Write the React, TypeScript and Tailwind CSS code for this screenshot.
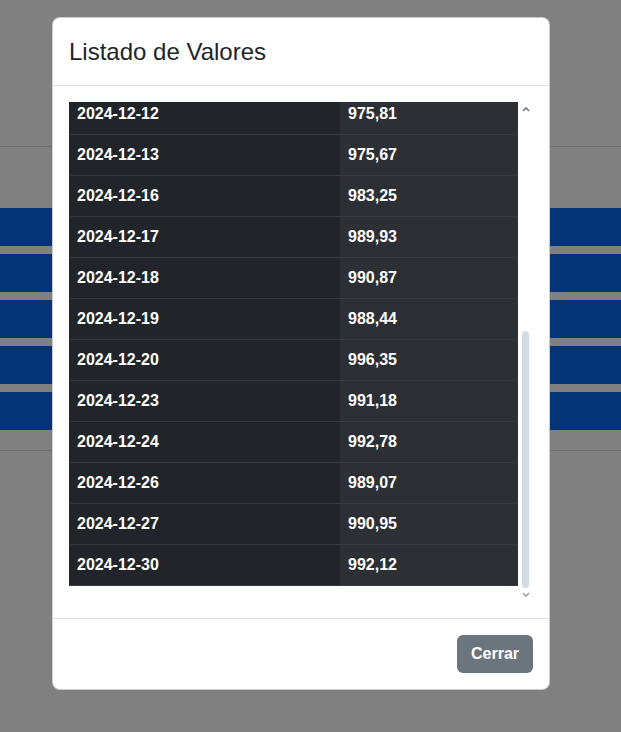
const valores = [
  ["2024-12-12", "975,81"],
  ["2024-12-13", "975,67"],
  ["2024-12-16", "983,25"],
  ["2024-12-17", "989,93"],
  ["2024-12-18", "990,87"],
  ["2024-12-19", "988,44"],
  ["2024-12-20", "996,35"],
  ["2024-12-23", "991,18"],
  ["2024-12-24", "992,78"],
  ["2024-12-26", "989,07"],
  ["2024-12-27", "990,95"],
  ["2024-12-30", "992,12"],
];

export default function App() {
  return (
    <div className="relative h-[732px] w-full overflow-hidden bg-[#808080] font-['Comic_Sans_MS','Liberation_Sans',sans-serif]">
      {/* pagina detras del backdrop */}
      <div className="mt-[146px] border-t border-[#6f6f6f]">
        <div className="mt-[61px] flex flex-col gap-2">
          <div className="h-[38px] bg-[#063479]" />
          <div className="h-[38px] bg-[#063479]" />
          <div className="h-[38px] bg-[#063479]" />
          <div className="h-[38px] bg-[#063479]" />
          <div className="h-[38px] bg-[#063479]" />
        </div>
        <div className="mt-[20px] border-t border-[#6f6f6f]" />
      </div>

      {/* modal */}
      <div className="absolute left-[52px] top-[17px] w-[498px] rounded-lg border border-black/20 bg-white">
        <div className="flex h-[68px] items-center border-b border-[#dee2e6] px-4">
          <h5 className="text-[24px] leading-9 text-[#212529]">Listado de Valores</h5>
        </div>

        <div className="p-4">
          <div className="flex h-[500px] overflow-hidden">
            <div className="flex w-[451px] flex-col justify-end pb-4">
              {valores.map(([fecha, valor]) => (
                <div
                  key={fecha}
                  className="flex h-[41px] shrink-0 border-b border-[#373b3e] text-[16px] font-bold leading-6 text-white"
                >
                  <div className="w-[271px] bg-[#212529] px-2 py-2">{fecha}</div>
                  <div className="flex-1 bg-[#2c3034] px-2 py-2">{valor}</div>
                </div>
              ))}
            </div>
            <div className="flex w-[15px] flex-col items-center">
              <div className="flex h-[14px] items-center justify-center">
                <svg width="8" height="6" viewBox="0 0 8 6">
                  <polyline points="1,5 4,2 7,5" fill="none" stroke="#7a7a7a" strokeWidth="1.6" />
                </svg>
              </div>
              <div className="flex flex-1 flex-col justify-end">
                <div className="h-[257px] w-[7px] rounded-full bg-[#d3dce5]" />
              </div>
              <div className="flex h-[14px] items-center justify-center">
                <svg width="8" height="6" viewBox="0 0 8 6">
                  <polyline points="1,1 4,4 7,1" fill="none" stroke="#a0a0a0" strokeWidth="1.6" />
                </svg>
              </div>
            </div>
          </div>
        </div>

        <div className="flex justify-end border-t border-[#dee2e6] px-4 py-4">
          <button className="h-[38px] rounded-md bg-[#6c757d] px-[14px] text-[16px] font-bold text-white">
            Cerrar
          </button>
        </div>
      </div>
    </div>
  );
}
